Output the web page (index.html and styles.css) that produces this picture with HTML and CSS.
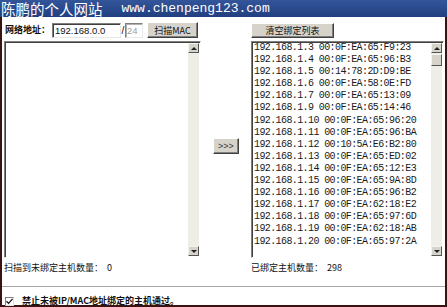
FILE: index.html
```html
<!DOCTYPE html>
<html lang="zh-CN">
<head>
	<meta charset="UTF-8">
	<title>IP/MAC绑定</title>
	<link rel="stylesheet" href="styles.css">
</head>
<body>
	<div class="win">
		<div class="title">
			<span class="title-cn">陈鹏的个人网站</span>
			<span class="title-url">www.chenpeng123.com</span>
		</div>

		<div class="main">
			<div class="pane pane-left">
				<div class="bar">
					<span class="lbl">网络地址：</span>
					<input type="text" class="ipt ipt-net" value="192.168.0.0">
					<span class="slash">/</span>
					<input type="text" class="ipt ipt-mask" value="24" disabled>
					<button class="btn btn-scan">扫描MAC</button>
				</div>
				<div class="list">
					<div class="list-body"></div>
					<div class="sbar">
						<span class="sbtn"><i class="arr up"></i></span>
						<span class="track"></span>
						<span class="sbtn"><i class="arr down"></i></span>
					</div>
				</div>
				<div class="count">扫描到未绑定主机数量：&nbsp; 0</div>
			</div>

			<div class="mid">
				<button class="btn btn-move">&gt;&gt;&gt;</button>
			</div>

			<div class="pane pane-right">
				<div class="bar">
					<button class="btn btn-clear">清空绑定列表</button>
				</div>
				<div class="list">
					<div class="list-body rows">
						<div>192.168.1.3 00:0F:EA:65:F9:23</div>
						<div>192.168.1.4 00:0F:EA:65:96:B3</div>
						<div>192.168.1.5 00:14:78:2D:D9:BE</div>
						<div>192.168.1.6 00:0F:EA:58:0E:FD</div>
						<div>192.168.1.7 00:0F:EA:65:13:09</div>
						<div>192.168.1.9 00:0F:EA:65:14:46</div>
						<div>192.168.1.10 00:0F:EA:65:96:20</div>
						<div>192.168.1.11 00:0F:EA:65:96:BA</div>
						<div>192.168.1.12 00:10:5A:E6:B2:80</div>
						<div>192.168.1.13 00:0F:EA:65:ED:02</div>
						<div>192.168.1.14 00:0F:EA:65:12:E3</div>
						<div>192.168.1.15 00:0F:EA:65:9A:8D</div>
						<div>192.168.1.16 00:0F:EA:65:96:B2</div>
						<div>192.168.1.17 00:0F:EA:62:18:E2</div>
						<div>192.168.1.18 00:0F:EA:65:97:6D</div>
						<div>192.168.1.19 00:0F:EA:62:18:AB</div>
						<div>192.168.1.20 00:0F:EA:65:97:2A</div>
					</div>
					<div class="sbar">
						<span class="sbtn"><i class="arr up"></i></span>
						<span class="thumb"></span>
						<span class="track"></span>
						<span class="sbtn"><i class="arr down"></i></span>
					</div>
				</div>
				<div class="count">已绑定主机数量：&nbsp; 298</div>
			</div>
		</div>

		<div class="sep"></div>

		<div class="opt">
			<span class="chk">
				<svg width="7" height="7" viewBox="0 0 7 7"><path d="M0.5 3.2 L2.6 5.4 L6.5 0.8" fill="none" stroke="#111" stroke-width="1.3"/></svg>
			</span>
			<span class="opt-text">禁止未被IP/MAC地址绑定的主机通过。</span>
		</div>
	</div>
</body>
</html>
```

FILE: styles.css
```css
*{
	box-sizing: border-box;
	margin: 0;
	padding: 0;
}
body{
	background: #fff;
	font-family: "Noto Sans CJK SC", "Liberation Sans", sans-serif;
	font-size: 9px;
	color: #111;
}
.win{
	width: 447px;
	height: 307px;
	border: 2px solid #3a1212;
	border-top: 0;
	background: #fff;
}
.title{
	height: 17px;
	margin: 0 -2px;
	padding-left: 1px;
	background: linear-gradient(#34559a, #213f80);
	color: #fff;
	white-space: nowrap;
	display: flex;
	align-items: center;
}
.title-cn{
	font-size: 14.5px;
	line-height: 17px;
}
.title-url{
	font-family: "Liberation Mono", monospace;
	font-size: 13px;
	margin-left: 19px;
	line-height: 17px;
}
.main{
	height: 269px;
	display: flex;
	padding: 5px 1px 0 2px;
}
.pane-left{
	width: 197px;
}
.pane-right{
	width: 193px;
}
.bar{
	height: 16px;
	display: flex;
	align-items: center;
}
.lbl{
	width: 47px;
	margin-left: 1px;
	font-weight: bold;
	line-height: 14px;
}
.ipt{
	height: 15px;
	border: 1px solid;
	border-color: #808080 #e8e8e8 #e8e8e8 #808080;
	box-shadow: inset 1px 1px 0 #404040;
	background: #fff;
	font-family: "Liberation Sans", sans-serif;
	font-size: 9.5px;
	padding: 0 2px;
	outline: none;
	color: #111;
}
.ipt-net{
	width: 69px;
}
.slash{
	width: 4px;
	font-family: "Liberation Sans", sans-serif;
	font-size: 10px;
	text-align: center;
}
.ipt-mask{
	width: 18px;
	color: #a0a0a0;
	box-shadow: inset 1px 1px 0 #b0b0b0;
	padding: 0 1px;
}
.btn{
	height: 16px;
	border: 1px solid;
	border-color: #fff #404040 #404040 #fff;
	box-shadow: inset -1px -1px 0 #808080;
	background: #d6d3cb;
	font-family: "Noto Sans CJK SC", sans-serif;
	font-size: 9px;
	line-height: 13px;
	color: #111;
}
.btn-scan{
	width: 51px;
	margin-left: 4px;
}
.btn-clear{
	width: 83px;
	height: 15px;
	margin-top: 1px;
}
.list{
	height: 217px;
	margin-top: 3px;
	display: flex;
	border: 1px solid;
	border-color: #808080 #fff #fff #808080;
	box-shadow: inset 1px 1px 0 #404040;
	background: #fff;
}
.list-body{
	flex: 1;
	padding: 0 0 0 2px;
	overflow: hidden;
}
.rows{
	font-family: "Liberation Mono", monospace;
	font-size: 10px;
	letter-spacing: -0.6px;
	line-height: 12.1px;
	color: #1a1a1a;
	white-space: nowrap;
}
.sbar{
	width: 11px;
	margin: 1px 1px 1px 0;
	display: flex;
	flex-direction: column;
	background: #eeede6;
}
.sbtn, .thumb{
	height: 10px;
	border: 1px solid;
	border-color: #f4f3ee #555 #555 #f4f3ee;
	background: #d6d3cb;
	display: flex;
	align-items: center;
	justify-content: center;
}
.thumb{
	height: 12px;
	margin-top: 1px;
}
.track{
	flex: 1;
}
.arr{
	width: 0;
	height: 0;
	border-left: 3px solid transparent;
	border-right: 3px solid transparent;
}
.arr.up{
	border-bottom: 3px solid #222;
}
.arr.down{
	border-top: 3px solid #222;
}
.count{
	margin-top: 4px;
	line-height: 12px;
	white-space: nowrap;
}
.mid{
	width: 50px;
	display: flex;
	justify-content: center;
	align-items: flex-start;
}
.btn-move{
	width: 26px;
	height: 16px;
	margin-top: 116px;
	font-family: "Liberation Sans", sans-serif;
	font-size: 9px;
	color: #333;
}
.sep{
	height: 2px;
	border-top: 1px solid #a6a6a6;
	border-bottom: 1px solid #fff;
}
.opt{
	display: flex;
	align-items: center;
	padding: 8px 0 0 3px;
}
.chk{
	width: 9px;
	height: 9px;
	border: 1px solid;
	border-color: #808080 #e0e0e0 #e0e0e0 #808080;
	background: #fff;
	display: flex;
	align-items: center;
	justify-content: center;
}
.opt-text{
	margin-left: 8px;
	font-weight: bold;
	line-height: 10px;
}
```
